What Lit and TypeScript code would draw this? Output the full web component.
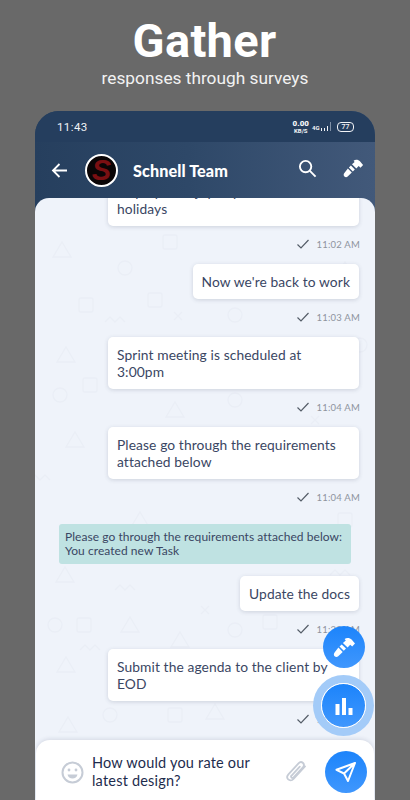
import { LitElement, html, css, svg } from "lit";
import { customElement } from "lit/decorators.js";

const hammer = svg`<path d="M12.6 4 C15 2.4 18 3 19.8 4.8 L23 8.6 L20.2 11.6 L18.2 9.8 L15.6 12.6 L10.9 8 L13.8 5.4 Z" fill="#fff"/><path d="M9.7 9.4 L14 13.6 L11.8 15.8 L7.5 11.5 Z M6.4 12.6 L10.7 16.9 L6.2 21.3 C5.2 22.3 3.6 22.3 2.6 21.3 C1.6 20.3 1.6 18.6 2.6 17.5 Z" fill="#fff"/>`;

const tick = html`<svg class="tick" viewBox="0 0 14 14"><path d="M1.5 7.5 L5 11 L12.5 3" fill="none" stroke="#555d68" stroke-width="1.2"/></svg>`;

const doodles: [string, number, number][] = [
  ["tri", 62, 250], ["sq", 170, 242], ["sq", 155, 300], ["circ", 125, 268], ["tri", 250, 290],
  ["tri", 66, 355], ["sq", 86, 305], ["x", 178, 316], ["circ", 235, 315], ["zig", 115, 322],
  ["tri", 75, 440], ["sq", 90, 385], ["circ", 60, 395], ["zig", 40, 480], ["x", 315, 420],
  ["tri", 175, 410], ["circ", 235, 400], ["sq", 300, 380], ["zig", 265, 470], ["tri", 140, 520],
  ["tri", 65, 575], ["sq", 84, 625], ["circ", 55, 625], ["zig", 125, 590], ["tri", 130, 625],
  ["circ", 235, 630], ["sq", 270, 622], ["tri", 180, 640], ["x", 205, 610], ["zig", 340, 575],
  ["tri", 66, 665], ["zig", 90, 650], ["tri", 68, 725], ["circ", 110, 715], ["sq", 175, 715],
  ["tri", 215, 712], ["zig", 120, 690], ["sq", 345, 520], ["circ", 360, 345], ["tri", 345, 270],
];

function doodle(kind: string, x: number, y: number) {
  const tx = x - 35;
  const ty = y - 198;
  const t = `translate(${tx} ${ty})`;
  if (kind === "tri") return svg`<path transform=${t} d="M0 -8 L9 7 L-9 7 Z"/>`;
  if (kind === "sq") return svg`<rect transform=${t} x="-7" y="-7" width="14" height="14" rx="2"/>`;
  if (kind === "circ") return svg`<circle transform=${t} r="7"/>`;
  if (kind === "x") return svg`<path transform=${t} d="M-4 -4 L4 4 M4 -4 L-4 4"/>`;
  return svg`<path transform=${t} d="M-10 0 L-5 -5 L0 0 L5 -5 L10 0"/>`;
}

type Msg = { text: string[]; time: string; w?: boolean };

@customElement("app-root")
export class AppRoot extends LitElement {
  static styles = css`
    :host {
      display: flex;
      flex-direction: column;
      width: 410px;
      height: 800px;
      overflow: hidden;
      background: #696969;
      font-family: "Lato", "Noto Sans", sans-serif;
    }
    .hero {
      display: flex;
      flex-direction: column;
      align-items: center;
      color: #fff;
      font-family: Roboto, sans-serif;
      height: 111px;
      flex: none;
    }
    .hero h1 {
      margin: 15px 1px 0 0;
      font-size: 47px;
      line-height: 52px;
      font-weight: 700;
      letter-spacing: 0.3px;
    }
    .hero p {
      margin: 1px 0 0;
      font-size: 17.3px;
      line-height: 20px;
      font-weight: 400;
      color: #f2f2f2;
    }
    .phone {
      position: relative;
      flex: 1;
      min-height: 0;
      margin: 0 35px;
      border-radius: 24px 24px 0 0;
      overflow: hidden;
      display: flex;
      flex-direction: column;
      background: linear-gradient(90deg, #263f5e 0%, #2e4868 45%, #42597a 100%);
    }
    .status {
      flex: none;
      height: 31px;
      padding: 0 21px 0 22px;
      display: flex;
      align-items: center;
      justify-content: space-between;
      background: #253e5e;
      color: #f2f4f7;
      font-family: Roboto, sans-serif;
    }
    .clock { font-size: 11.5px; letter-spacing: 0.4px; }
    .stat { display: flex; align-items: center; gap: 3px; }
    .speed {
      display: flex; flex-direction: column; align-items: center;
      font-size: 6px; line-height: 6px; font-weight: 700;
    }
    .speed b { font-size: 8px; line-height: 8px; }
    .net { font-size: 6px; font-weight: 700; line-height: 7px; display: flex; align-items: flex-end; gap: 1px; }
    .bars { display: flex; align-items: flex-end; gap: 1.5px; }
    .bars i { display: block; width: 1.5px; background: #f2f4f7; }
    .bars i:nth-child(1) { height: 3px; }
    .bars i:nth-child(2) { height: 3px; }
    .bars i:nth-child(3) { height: 5px; }
    .bars i:nth-child(4) { height: 9px; background: #7f90a6; }
    .batt {
      margin-left: 3px;
      width: 15px; height: 8px;
      border: 1px solid #f2f4f7;
      border-radius: 4px;
      font-size: 7px; line-height: 8px; text-align: center; font-weight: 500;
    }
    .appbar {
      flex: none;
      height: 56px;
      display: flex;
      align-items: center;
      padding: 0 11px 0 16px;
      color: #fff;
    }
    .back { width: 17px; height: 17px; flex: none; margin-right: 17px; }
    .avatar {
      flex: none;
      width: 33px; height: 33px;
      box-sizing: border-box;
      border-radius: 50%;
      border: 2px solid #fff;
      background: #0a0506;
      color: #7a0f12;
      display: flex;
      align-items: center;
      justify-content: center;
      font-family: "Liberation Sans", sans-serif;
      font-weight: 700;
      font-style: italic;
      font-size: 29px;
      line-height: 29px;
      margin-right: 15px;
      overflow: hidden;
    }
    .name { flex: 1; font-size: 16.2px; font-weight: 900; letter-spacing: 0.1px; white-space: nowrap; }
    .search { width: 19px; height: 19px; flex: none; margin-right: 25px; margin-top: -4px; }
    .hammer { width: 22px; height: 22px; flex: none; margin-top: -4px; }
    .panel {
      position: relative;
      flex: 1;
      min-height: 0;
      border-radius: 14px 14px 0 0;
      background: #eff3fa;
      overflow: hidden;
      display: flex;
      flex-direction: column;
    }
    .doodles {
      position: absolute;
      inset: 0;
      width: 100%;
      height: 100%;
      fill: none;
      stroke: #eaeef6;
      stroke-width: 1.3;
    }
    .scroll {
      position: relative;
      flex: 1;
      min-height: 0;
      display: flex;
      flex-direction: column;
      justify-content: flex-end;
      padding: 0 16px 1px 24px;
    }
    .msg { display: flex; flex-direction: column; align-items: flex-end; flex: none; }
    .bubble {
      box-sizing: border-box;
      background: #fff;
      border-radius: 5px;
      box-shadow: 0 1px 4px rgba(50, 60, 90, 0.18);
      padding: 9px;
      font-size: 13.8px;
      line-height: 17px;
      color: #3a4663;
      letter-spacing: 0.1px;
    }
    .bubble.wide { width: 251px; }
    .meta {
      height: 14px;
      margin: 11px -1px 13px 0;
      display: flex;
      align-items: center;
      gap: 7px;
      font-size: 9.5px;
      color: #8e949e;
      letter-spacing: 0.2px;
    }
    .tick { width: 14px; height: 14px; }
    .gap { margin-bottom: 7px; }
    .banner {
      flex: none;
      width: 292px;
      box-sizing: border-box;
      margin: 0 0 12px 0;
      padding: 6px;
      background: #bfe2e2;
      border-radius: 3px;
      font-size: 12px;
      line-height: 14px;
      color: #3a4663;
      letter-spacing: 0.05px;
      white-space: nowrap;
    }
    .composer {
      position: relative;
      flex: none;
      height: 60px;
      margin: 0 1px;
      background: #fff;
      border-radius: 14px 14px 0 0;
      box-shadow: 0 -1px 4px rgba(50, 60, 90, 0.14);
      display: flex;
      align-items: center;
      padding: 0 7px 0 25px;
    }
    .emoji { flex: none; width: 23px; height: 23px; margin-right: 8px; margin-top: 4px; }
    .input {
      flex: 1;
      font-size: 14.5px;
      line-height: 18px;
      color: #1d2c4d;
      letter-spacing: 0.2px;
      margin-top: 3px;
    }
    .clip { flex: none; width: 25px; height: 25px; margin-right: 16px; margin-top: 4px; }
    .fab {
      width: 42px; height: 42px;
      border-radius: 50%;
      background: linear-gradient(180deg, #1c84fb 0%, #4097fd 100%);
      display: flex;
      align-items: center;
      justify-content: center;
      flex: none;
    }
    .send { margin-top: 4px; }
    .send svg { width: 24px; height: 24px; }
    .float { position: absolute; }
    .f1 { left: 288px; top: 428px; }
    .f1 svg { width: 24px; height: 24px; }
    .f2 {
      left: 286px; top: 485px;
      box-sizing: border-box;
      width: 45px; height: 45px;
      border: 1px solid #fff;
      box-shadow: 0 0 0 8px #a3cbf8;
    }
    .f2 svg { width: 22px; height: 22px; }
  `;

  private msgs: Msg[] = [
    { text: ["Hope you enjoyed your", "holidays"], time: "11:02 AM", w: true },
    { text: ["Now we're back to work"], time: "11:03 AM" },
    { text: ["Sprint meeting is scheduled at", "3:00pm"], time: "11:04 AM", w: true },
    { text: ["Please go through the requirements", "attached below"], time: "11:04 AM", w: true },
  ];

  private bubble(m: Msg, extra = "") {
    return html`<div class="msg ${extra}">
      <div class="bubble ${m.w ? "wide" : ""}">${m.text.map((t, i) => html`${i ? html`<br />` : ""}${t}`)}</div>
      <div class="meta">${tick}<span>${m.time}</span></div>
    </div>`;
  }

  render() {
    return html`
      <div class="hero">
        <h1>Gather</h1>
        <p>responses through surveys</p>
      </div>
      <div class="phone">
        <div class="status">
          <span class="clock">11:43</span>
          <div class="stat">
            <div class="speed"><b>0.00</b><span>KB/S</span></div>
            <div class="net"><span>4G</span><div class="bars"><i></i><i></i><i></i><i></i></div></div>
            <div class="batt">77</div>
          </div>
        </div>
        <div class="appbar">
          <svg class="back" viewBox="0 0 17 17"><path d="M16 8.5 H2 M8.5 2 L2 8.5 L8.5 15" fill="none" stroke="#fff" stroke-width="1.8"/></svg>
          <div class="avatar">S</div>
          <div class="name">Schnell Team</div>
          <svg class="search" viewBox="0 0 20 20"><circle cx="8" cy="8" r="6" fill="none" stroke="#fff" stroke-width="2"/><path d="M12.5 12.5 L18.5 18.5" stroke="#fff" stroke-width="2"/></svg>
          <svg class="hammer" viewBox="0 0 24 24">${hammer}</svg>
        </div>
        <div class="panel">
          <svg class="doodles" viewBox="0 0 340 602">${doodles.map(([k, x, y]) => doodle(k, x, y))}</svg>
          <div class="scroll">
            ${this.bubble(this.msgs[0])}
            ${this.bubble(this.msgs[1])}
            ${this.bubble(this.msgs[2])}
            ${this.bubble(this.msgs[3], "gap")}
            <div class="banner">Please go through the requirements attached below:<br />You created new Task</div>
            ${this.bubble({ text: ["Update the docs"], time: "11:22 AM" })}
            ${this.bubble({ text: ["Submit the agenda to the client by", "EOD"], time: "11:23 AM", w: true })}
          </div>
          <div class="composer">
            <svg class="emoji" viewBox="0 0 23 23">
              <circle cx="11.5" cy="11.5" r="10" fill="none" stroke="#c6ccd6" stroke-width="2"/>
              <circle cx="8" cy="9" r="1.4" fill="#c6ccd6"/><circle cx="15" cy="9" r="1.4" fill="#c6ccd6"/>
              <path d="M6.5 13.5 H16.5 C16 16 14 17.5 11.5 17.5 C9 17.5 7 16 6.5 13.5 Z" fill="#c6ccd6"/>
            </svg>
            <div class="input">How would you rate our<br />latest design?</div>
            <svg class="clip" viewBox="0 0 25 25"><path d="M21 6.5 L9.5 19 C7.8 20.8 5.5 20.6 4.2 19.4 C2.9 18.1 2.9 16 4.4 14.3 L14.5 3.4 C15.8 2 17.8 1.9 19 3 C20.2 4.2 20.1 6 18.9 7.4 L9.6 17.4 C9 18 8.1 18.1 7.5 17.5 C7 17 7 16.1 7.6 15.5 L15.8 6.7" fill="none" stroke="#c6ccd6" stroke-width="1.8" stroke-linecap="round"/></svg>
            <div class="fab send">
              <svg viewBox="0 0 24 24"><path d="M21 3 L2.5 9.8 L10 13.5 L14 21 Z M21 3 L10 13.5" fill="none" stroke="#fff" stroke-width="2" stroke-linejoin="round"/></svg>
            </div>
          </div>
          <div class="fab float f1"><svg viewBox="0 0 24 24">${hammer}</svg></div>
          <div class="fab float f2">
            <svg viewBox="0 0 22 22"><path d="M2.5 9 H6.5 V20 H2.5 Z M9 3 H13 V20 H9 Z M15.5 13 H19.5 V20 H15.5 Z" fill="#fff"/></svg>
          </div>
        </div>
      </div>
    `;
  }
}
